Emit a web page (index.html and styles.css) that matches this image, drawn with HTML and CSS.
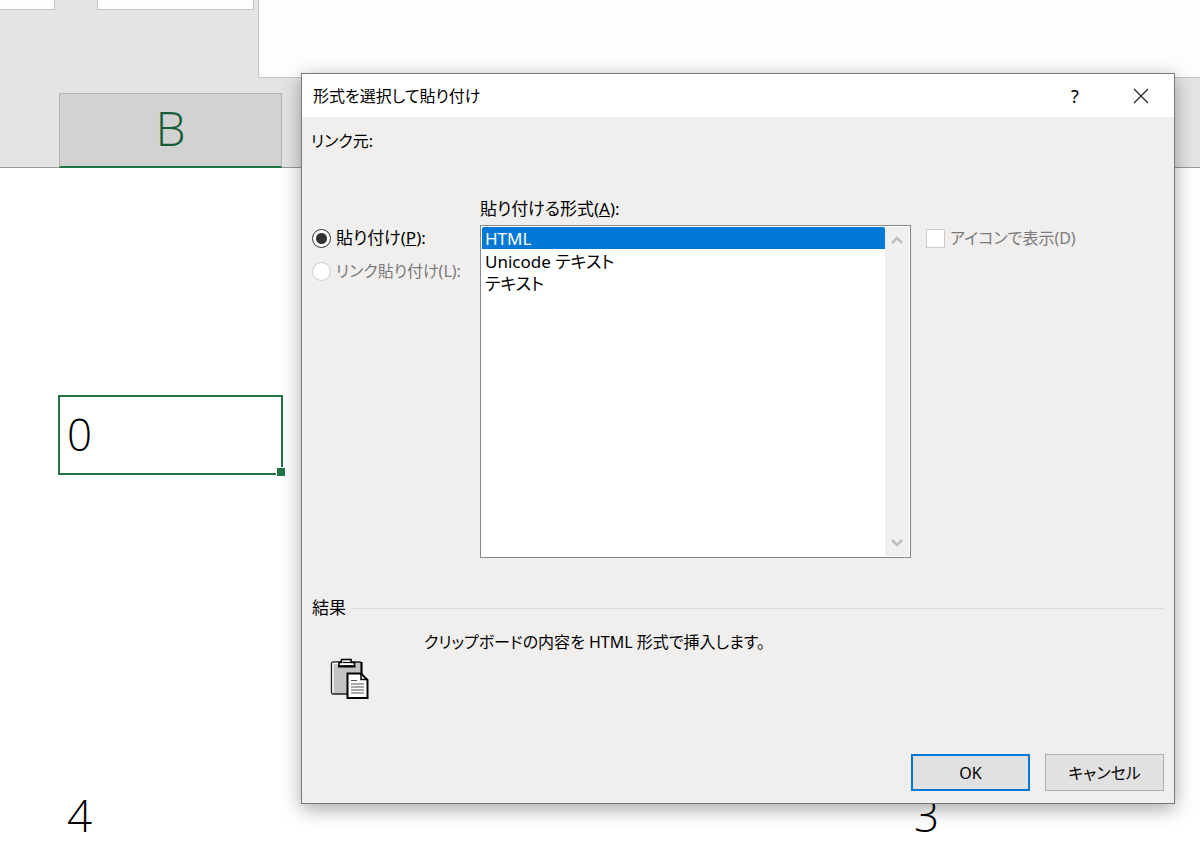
FILE: index.html
```html
<!DOCTYPE html>
<html lang="ja">
<head>
    <meta charset="UTF-8">
    <meta name="viewport" content="width=device-width, initial-scale=1.0">
    <title>形式を選択して貼り付け</title>
    <link rel="stylesheet" href="styles.css">
</head>
<body>
    <div class="sheet">
        <div class="formula-row">
            <div class="name-box"></div>
            <div class="formula-tools"></div>
            <div class="formula-bar"></div>
        </div>

        <table class="grid">
            <colgroup>
                <col class="col-a">
                <col class="col-b">
                <col class="col-wide">
                <col class="col-wide">
                <col>
            </colgroup>
            <thead>
                <tr><th></th><th class="active" scope="col">B</th><th></th><th></th><th></th></tr>
            </thead>
            <tbody>
                <tr><td></td><td></td><td></td><td></td><td></td></tr>
                <tr><td></td><td></td><td></td><td></td><td></td></tr>
                <tr><td></td><td></td><td></td><td></td><td></td></tr>
                <tr class="current"><td></td><td class="selected">0</td><td></td><td></td><td></td></tr>
                <tr><td></td><td></td><td></td><td></td><td></td></tr>
                <tr><td></td><td></td><td></td><td></td><td></td></tr>
                <tr><td></td><td></td><td></td><td></td><td></td></tr>
                <tr><td></td><td></td><td></td><td></td><td></td></tr>
                <tr><td></td><td>4</td><td></td><td></td><td>3</td></tr>
            </tbody>
        </table>
    </div>

    <form class="dialog" role="dialog" aria-labelledby="dialogTitle">
        <div class="title-bar">
            <h1 id="dialogTitle">形式を選択して貼り付け</h1>
            <button type="button" class="title-button help">?</button>
            <button type="button" class="title-button" aria-label="閉じる">
                <svg width="16" height="16" viewBox="0 0 16 16"><path d="M1 1L15 15M15 1L1 15" stroke="#222" stroke-width="1.2" fill="none"/></svg>
            </button>
        </div>

        <div class="dialog-body">
            <p class="source">リンク元:</p>

            <div class="options">
                <div class="modes">
                    <label class="choice"><input type="radio" name="mode" checked><span>貼り付け(<u>P</u>):</span></label>
                    <label class="choice disabled"><input type="radio" name="mode" disabled><span>リンク貼り付け(L):</span></label>
                </div>
                <div class="formats">
                    <label for="formatList">貼り付ける形式(<u>A</u>):</label>
                    <div class="list-box">
                        <select id="formatList" size="15">
                            <option selected>HTML</option>
                            <option>Unicode テキスト</option>
                            <option>テキスト</option>
                        </select>
                        <div class="scrollbar">
                            <svg width="12" height="10" viewBox="0 0 12 10"><path d="M1 8L6 3L11 8" stroke="#bfbfbf" stroke-width="2.5" fill="none"/></svg>
                            <svg width="12" height="10" viewBox="0 0 12 10"><path d="M1 2L6 7L11 2" stroke="#bfbfbf" stroke-width="2.5" fill="none"/></svg>
                        </div>
                    </div>
                </div>
                <div class="display">
                    <label class="choice disabled"><input type="checkbox" disabled><span>アイコンで表示(D)</span></label>
                </div>
            </div>

            <h2 class="group-title">結果</h2>
            <div class="result">
                <svg class="clipboard" width="40" height="42" viewBox="0 0 40 42">
                    <rect x="1.5" y="4" width="30" height="32" rx="2" fill="#c3c3c3" stroke="#222" stroke-width="1.4"/>
                    <path d="M3 35V5.500H9" stroke="#fff" stroke-width="1.3" fill="none"/>
                    <path d="M31.500 4V17" stroke="#000" stroke-width="2"/>
                    <path d="M9 8V4.500H11.500V1.500H21V4.500H24.500V8Z" fill="#fff" stroke="#000" stroke-width="1.6"/>
                    <path d="M8 8.500H25.500" stroke="#000" stroke-width="2"/>
                    <path d="M13 4.500H20" stroke="#000" stroke-width="1.2"/>
                    <path d="M17.500 15.500H31L37.500 22V40H17.500Z" fill="#fff" stroke="#000" stroke-width="2"/>
                    <path d="M31 15.500V21.500H37.500" fill="none" stroke="#000" stroke-width="1.5"/>
                    <path d="M21 22.500H27M21 26H34M21 29H34M21 32H34M21 35H34" stroke="#555" stroke-width="1.2"/>
                </svg>
                <p>クリップボードの内容を HTML 形式で挿入します。</p>
            </div>

            <div class="buttons">
                <button type="submit" class="button primary">OK</button>
                <button type="button" class="button">キャンセル</button>
            </div>
        </div>
    </form>
</body>
</html>
```

FILE: styles.css
```css
* {
    box-sizing: border-box;
}
body {
    margin: 0;
    min-height: 100vh;
    overflow: hidden;
    position: relative;
    background-color: #fff;
    color: #000;
    font-family: 'Noto Sans', 'Noto Sans CJK JP', sans-serif;
    font-size: 16px;
    line-height: 24px;
    font-feature-settings: 'palt';
}
h1, h2, p {
    margin: 0;
    font-size: inherit;
    font-weight: normal;
}
button, select {
    font: inherit;
    font-feature-settings: inherit;
    color: inherit;
}

/* Worksheet */
.sheet {
    background-color: #e4e4e4;
}
.formula-row {
    display: flex;
    align-items: flex-start;
    height: 93px;
}
.name-box,
.formula-tools,
.formula-bar {
    height: 10px;
    background-color: #fdfdfd;
    border: 1px solid #c6c6c6;
    border-top: none;
}
.name-box {
    width: 55px;
    border-left: none;
    margin-right: 42px;
}
.formula-tools {
    width: 157px;
    margin-right: 4px;
}
.formula-bar {
    flex: 1;
    height: 78px;
    border-right: none;
}
.grid {
    width: 100%;
    table-layout: fixed;
    border-collapse: separate;
    border-spacing: 0;
    font-family: 'Open Sans', 'Noto Sans', sans-serif;
    font-size: 44px;
    font-weight: 300;
    line-height: 60px;
}
.col-a {
    width: 59px;
}
.col-b {
    width: 223px;
}
.col-wide {
    width: 312px;
}
.grid th {
    height: 75px;
    padding: 0 0 5px;
    font-size: 48px;
    font-weight: 300;
    border-bottom: 1px solid #999;
}
.grid th.active {
    background-color: #d2d2d2;
    color: #185c37;
    border: 1px solid #b4b4b4;
    border-bottom: 2px solid #217346;
}
.grid td {
    height: 76px;
    padding: 0 8px 3px;
    background-color: #fff;
}
.grid .current td {
    height: 78px;
}
.grid td.selected {
    position: relative;
    outline: 2px solid #217346;
    outline-offset: -1px;
}
.selected::after {
    content: '';
    position: absolute;
    right: -4px;
    bottom: -3px;
    width: 8px;
    height: 8px;
    background-color: #217346;
    border: 1px solid #fff;
}

/* Dialog window */
.dialog {
    position: absolute;
    top: 73px;
    left: 301px;
    right: 25px;
    background-color: #f0efee;
    border: 1px solid #77797b;
    box-shadow: 0 5px 18px rgba(0, 0, 0, 0.35);
}
.title-bar {
    display: flex;
    align-items: center;
    height: 43px;
    padding-left: 11px;
    background-color: #fff;
}
.title-bar h1 {
    flex: 1;
}
.title-button {
    display: flex;
    align-items: center;
    justify-content: center;
    width: 66px;
    height: 42px;
    padding: 0;
    border: none;
    background: none;
}
.title-button.help {
    font-size: 18px;
}
.dialog-body {
    padding: 12px 10px;
}
.source {
    margin-left: -1px;
}
.options {
    display: grid;
    grid-template-columns: 168px 431px 1fr;
    margin-top: 44px;
}
.modes {
    display: flex;
    flex-direction: column;
    gap: 9px;
    padding-top: 29px;
}
.choice {
    display: flex;
    align-items: center;
    gap: 5px;
    font-size: 17px;
    white-space: nowrap;
}
.choice input {
    appearance: none;
    flex: none;
    width: 19px;
    height: 19px;
    margin: 0;
    background-color: #fff;
    border: 1px solid #333;
}
.choice input[type="radio"] {
    border-radius: 50%;
}
.choice input[type="radio"]:checked {
    background-image: radial-gradient(circle, #333 5px, #fff 6px);
}
.choice.disabled {
    color: #7a7a7a;
    font-size: 16px;
}
.choice.disabled input {
    border-color: #ccc;
}
.formats > label {
    display: block;
    margin-bottom: 4px;
    font-size: 17px;
}
.list-box {
    display: flex;
    height: 333px;
    padding: 1px;
    background-color: #fff;
    border: 1px solid #828790;
}
.list-box select {
    flex: 1;
    padding: 0;
    border: none;
    outline: none;
    background-color: #fff;
    font-size: 17px;
    overflow: hidden;
    scrollbar-width: none;
}
.list-box option {
    display: flex;
    align-items: center;
    height: 22px;
    min-height: 22px;
    padding: 0 3px;
    border-radius: 0;
}
.list-box option:checked {
    background: linear-gradient(#0078d7, #0078d7);
    color: #fff;
    -webkit-text-fill-color: #fff;
}
.scrollbar {
    display: flex;
    flex-direction: column;
    justify-content: space-between;
    align-items: center;
    width: 24px;
    padding: 8px 0;
    background-color: #f0f0f0;
}
.display {
    padding: 29px 0 0 15px;
}
.group-title {
    display: flex;
    align-items: center;
    gap: 5px;
    margin-top: 38px;
    font-size: 17px;
}
.group-title::after {
    content: '';
    flex: 1;
    height: 1px;
    background-color: #dcdcdc;
}
.result {
    display: flex;
    align-items: flex-start;
    gap: 54px;
    min-height: 134px;
    padding: 10px 0 0 18px;
}
.clipboard {
    flex: none;
    margin-top: 28px;
}
.buttons {
    display: flex;
    justify-content: flex-end;
    gap: 15px;
}
.button {
    width: 119px;
    height: 37px;
    padding: 0;
    background-color: #e1e1e1;
    border: 1px solid #adadad;
}
.button.primary {
    border: 2px solid #0078d7;
}
```
